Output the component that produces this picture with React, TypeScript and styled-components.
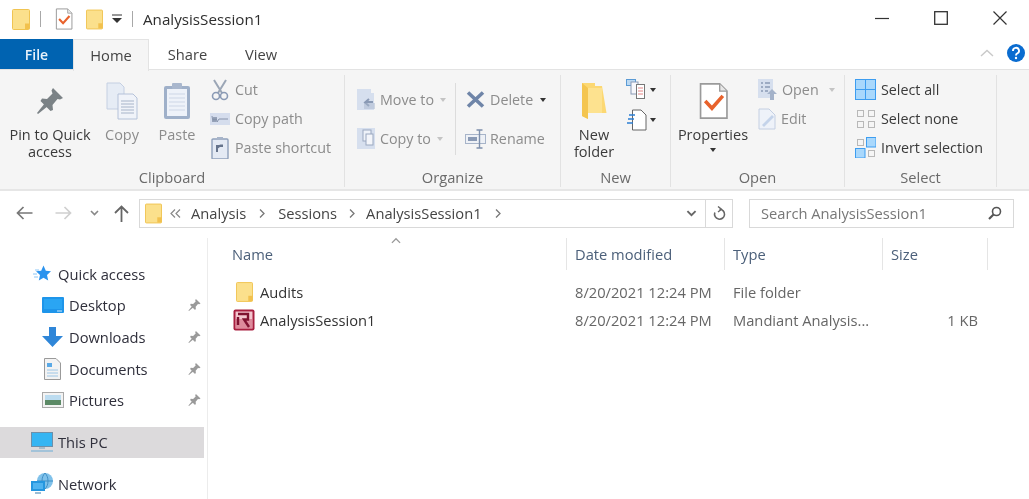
import React from "react";
import styled, { createGlobalStyle } from "styled-components";

const Global = createGlobalStyle`
  html, body { margin: 0; padding: 0; background: #fff; }
  body { font-family: "Open Sans", "Noto Sans", "Liberation Sans", sans-serif; overflow: hidden; }
  svg { display: block; flex: none; }
`;

const Page = styled.div`
  width: 1029px; height: 499px; overflow: hidden; background: #fff; color: #3a3a3a;
  font-size: 14.7px; filter: blur(0.5px);
`;
const Spacer = styled.span<{ $w: number }>`width: ${p => p.$w}px; flex: none;`;

/* ------- title bar ------- */
const TitleBar = styled.div`display: flex; align-items: center; height: 38px; padding-left: 12px;`;
const QuickSep = styled.div<{ $l: number; $r: number }>`
  width: 1px; height: 16px; background: #a8a8a8; margin: 0 ${p => p.$r}px 0 ${p => p.$l}px;
`;
const TitleText = styled.div`font-size: 15.2px; color: #2e2e2e; flex: 1;`;
const WinControls = styled.div`display: flex; align-items: center; margin-right: 22px; gap: 45px; margin-top: -2px;`;

/* ------- tabs ------- */
const TabRow = styled.div`display: flex; height: 32px; position: relative; align-items: flex-start; border-bottom: 1px solid #e3e3e3; box-sizing: border-box;`;
const FileTab = styled.div`
  width: 73px; height: 30px; margin-top: 1px; background: #0063b1; color: #e8f2fb; font-size: 14px; font-weight: 600;
  display: flex; align-items: center; justify-content: center;
`;
const Tab = styled.div<{ $w: number; $active?: boolean }>`
  width: ${p => p.$w}px; height: ${p => (p.$active ? 32 : 30)}px; margin-top: 1px; box-sizing: border-box;
  display: flex; align-items: center; justify-content: center; color: #444; padding-bottom: ${p => (p.$active ? 2 : 0)}px;
  background: ${p => (p.$active ? "#f5f5f5" : "transparent")};
  border: ${p => (p.$active ? "1px solid #e3e3e3" : "none")}; border-bottom: none;
`;
const TabEnd = styled.div`margin-left: auto; display: flex; align-items: center; gap: 13px; height: 30px; margin-right: 4px;`;

/* ------- ribbon ------- */
const Ribbon = styled.div`
  display: flex; height: 121px; background: #f5f5f5; border-bottom: 2px solid #e6e6e6; box-sizing: border-box; padding-top: 5px;
`;
const Group = styled.div<{ $w: number; $plain?: boolean }>`
  width: ${p => p.$w}px; box-sizing: border-box; display: flex; flex-direction: column; height: 112px;
  border-right: ${p => (p.$plain ? "none" : "1px solid #e2e2e2")};
`;
const GroupBody = styled.div`flex: 1; display: flex; align-items: flex-start; min-height: 0;`;
const GroupLabel = styled.div`height: 20px; line-height: 20px; text-align: center; color: #6a6a6a; font-size: 14.7px;`;
const LargeBtn = styled.div<{ $w: number; $dim?: boolean }>`
  width: ${p => p.$w}px; display: flex; flex-direction: column; align-items: center;
  color: ${p => (p.$dim ? "#8c8c8c" : "#3a3a3a")}; line-height: 17px; text-align: center; flex: none; font-size: 14.5px;
`;
const LargeIcon = styled.div`height: 46px; margin-top: 3px; display: flex; align-items: center; justify-content: center;`;
const LargeLabel = styled.div`margin-top: 2px; display: flex; flex-direction: column; align-items: center;`;
const SmallCol = styled.div<{ $ml: number; $gap?: number; $pt?: number }>`
  display: flex; flex-direction: column; margin-left: ${p => p.$ml}px; padding-top: ${p => p.$pt ?? 0}px; gap: ${p => p.$gap ?? 0}px; flex: none;
`;
const SmallBtn = styled.div<{ $dim?: boolean }>`
  display: flex; align-items: center; gap: 5px; height: 29px; white-space: nowrap; font-size: 14.3px; color: ${p => (p.$dim ? "#8c8c8c" : "#3a3a3a")};
`;
const IconSlot = styled.span<{ $w: number }>`width: ${p => p.$w}px; display: flex; justify-content: center; flex: none;`;
const VSep = styled.div`width: 1px; height: 72px; background: #dcdcdc; margin-top: 8px; flex: none;`;
const Caret = styled.span<{ $dim?: boolean; $ml?: number; $mt?: number }>`
  display: inline-block; width: 0; height: 0; margin-left: ${p => p.$ml ?? 5}px; margin-top: ${p => p.$mt ?? 0}px;
  border-left: 3.5px solid transparent; border-right: 3.5px solid transparent;
  border-top: 4px solid ${p => (p.$dim ? "#c4c4c4" : "#333")};
`;

/* ------- address bar ------- */
const AddressRow = styled.div`display: flex; align-items: center; height: 47px; padding-bottom: 3px; box-sizing: border-box;`;
const NavArrows = styled.div`display: flex; align-items: center; width: 139px; flex: none; padding-left: 16px; box-sizing: border-box;`;
const PathBox = styled.div`
  width: 594px; height: 29px; box-sizing: border-box; border: 1px solid #d9d9d9; display: flex; align-items: center; padding-left: 5px; flex: none;
`;
const Crumbs = styled.div`display: flex; align-items: center; flex: 1; color: #444; margin-left: 8px;`;
const Crumb = styled.span<{ $mr?: number }>`margin-right: ${p => p.$mr ?? 12}px; display: flex; white-space: nowrap;`;
const RefreshCell = styled.div`
  width: 26px; height: 27px; border-left: 1px solid #d9d9d9; display: flex; align-items: center; justify-content: center; flex: none; margin-left: 8px;
`;
const SearchBox = styled.div`
  width: 265px; height: 29px; margin-left: 16px; box-sizing: border-box; border: 1px solid #d9d9d9; display: flex; align-items: center;
  justify-content: space-between; padding: 0 11px; color: #777; flex: none;
`;

/* ------- main ------- */
const Main = styled.div`display: flex; height: 261px;`;
const Sidebar = styled.div`width: 208px; flex: none; border-right: 1px solid #ececec; box-sizing: border-box; padding-top: 20px; height: 261px; overflow: hidden;`;
const NavItem = styled.div<{ $indent: number; $selected?: boolean; $h?: number; $mt?: number }>`
  display: flex; align-items: center; height: ${p => p.$h ?? 31.6}px; padding-left: ${p => p.$indent}px; width: 204px; box-sizing: border-box;
  background: ${p => (p.$selected ? "#dcdadc" : "transparent")}; margin-top: ${p => p.$mt ?? 0}px; color: #2f2f3b; position: relative; gap: 5px;
`;
const NavPin = styled.span`position: absolute; right: 3px; top: 50%; transform: translateY(-50%);`;
const Content = styled.div`flex: 1; min-width: 0; position: relative;`;
const SortMark = styled.span`position: absolute; left: 182px; top: -1px; transform: scaleY(-1);`;
const Columns = styled.div`display: grid; grid-template-columns: 359px 158px 158px 105px; width: 780px;`;
const HeaderCell = styled.div`
  height: 32px; display: flex; align-items: center; padding-left: 8px; border-right: 1px solid #e5e5e5; box-sizing: border-box; color: #4c607a;
  &:first-child { padding-left: 24px; }
`;
const Rows = styled.div`padding-top: 8px;`;
const Row = styled.div`display: grid; grid-template-columns: 359px 158px 158px 95px; width: 770px; height: 28px; align-items: center; color: #666;`;
const NameCell = styled.div`display: flex; align-items: center; gap: 5px; padding-left: 25px; color: #333;`;
const Cell = styled.div<{ $right?: boolean }>`padding-left: 8px; text-align: ${p => (p.$right ? "right" : "left")}; white-space: nowrap;`;

/* ------- icons ------- */
const FolderIcon = ({ w = 18, h = 21 }: { w?: number; h?: number }) => (
  <svg width={w} height={h} viewBox="0 0 18 21">
    <rect x="0.5" y="0.5" width="17" height="20" rx="1" fill="#fbe08c" stroke="#f0c452" />
    <path d="M13 20V14.5H17.5V20Z" fill="#f2c14e" />
  </svg>
);
const CheckDoc = ({ w = 18, h = 22 }: { w?: number; h?: number }) => (
  <svg width={w} height={h} viewBox="0 0 28 36">
    <path d="M1.5 1.5H20L27 8.5V34.5H1.5Z" fill="#fff" stroke="#9a9a9a" strokeWidth="1.6" />
    <path d="M20 1.5V8.5H27" fill="#e8e8e8" stroke="#9a9a9a" strokeWidth="1.3" />
    <path d="M6 18L12.5 25L23 13" fill="none" stroke="#e8622c" strokeWidth="3.4" />
  </svg>
);
const Pin = ({ s = 28, c = "#7b8286" }: { s?: number; c?: string }) => (
  <svg width={s} height={s} viewBox="0 0 28 28">
    <path d="M17 1L27 11L24 12.5L21.5 12L16.5 18L17 23L14.5 24L4.5 14L6 11.5L11 12L16.5 6.5L15.5 3.5Z" fill={c} />
    <path d="M9 16L1 26L2 27L12 19Z" fill={c} />
  </svg>
);
const CopyIcon = () => (
  <svg width="32" height="38" viewBox="0 0 32 38">
    <path d="M1 1H14L18 5V27H1Z" fill="#e6ecf5" stroke="#c4cfe2" />
    <path d="M12 12H27L31 16V37H12Z" fill="#f0f3f9" stroke="#b5c2d9" />
    {[19, 22, 25, 28, 31].map(y => <path key={y} d={`M15 ${y}H28`} stroke="#a7b4c9" />)}
  </svg>
);
const PasteIcon = () => (
  <svg width="28" height="38" viewBox="0 0 28 38">
    <rect x="1" y="4" width="26" height="33" rx="2" fill="#9fb0c9" />
    <rect x="4" y="7" width="20" height="27" fill="#eef2f9" />
    <rect x="9" y="1" width="10" height="6" rx="1" fill="#a9b7cd" />
    {[12, 16, 20, 24, 28].map(y => <path key={y} d={`M6 ${y}H22`} stroke="#cdd6e6" />)}
  </svg>
);
const Scissors = () => (
  <svg width="18" height="22" viewBox="0 0 18 22">
    <path d="M3 1L11 14M15 1L7 14" stroke="#9ba6b6" strokeWidth="2" fill="none" />
    <circle cx="5" cy="17" r="3.5" fill="none" stroke="#8a9ab5" strokeWidth="1.6" />
    <circle cx="13" cy="17" r="3.5" fill="none" stroke="#8a9ab5" strokeWidth="1.6" />
  </svg>
);
const CopyPath = () => (
  <svg width="20" height="12" viewBox="0 0 20 12">
    <rect width="20" height="12" fill="#d5dded" />
    <path d="M2 3L3 9L4 4L5 9L6 4L7 9L9 6H18" stroke="#7d8aa3" strokeWidth="0.9" fill="none" />
  </svg>
);
const PasteShortcut = () => (
  <svg width="18" height="22" viewBox="0 0 18 22">
    <rect x="1" y="2" width="16" height="20" rx="1" fill="#e4eaf4" stroke="#8fa0bb" strokeWidth="1.4" />
    <rect x="6" y="0" width="6" height="3" fill="#a7b4c9" />
    <path d="M6 15V9H11V7.5M6 11L10 8" stroke="#66748c" strokeWidth="2" fill="none" />
  </svg>
);
const MoveTo = () => (
  <svg width="18" height="21" viewBox="0 0 18 21">
    <path d="M0 0H14V4H17V21H0Z" fill="#d6dfee" />
    <path d="M16 13H9M12 10L8 13.5L12 17" stroke="#8a9ab5" strokeWidth="2" fill="none" />
    <rect x="7" y="14" width="11" height="6" fill="#a9b7cd" opacity=".5" />
  </svg>
);
const CopyTo = () => (
  <svg width="18" height="21" viewBox="0 0 18 21">
    <rect width="18" height="21" fill="#d6dfee" />
    <rect x="6" y="2" width="8" height="11" fill="#eef2f9" stroke="#9aa8bf" />
    <rect x="9" y="6" width="7" height="11" fill="#f3f5fa" stroke="#9aa8bf" />
  </svg>
);
const DeleteX = () => (
  <svg width="19" height="17" viewBox="0 0 19 17">
    <path d="M2 1.5L17 15.5M17 1.5L2 15.5" stroke="#6f85a8" strokeWidth="3.6" />
  </svg>
);
const RenameIcon = () => (
  <svg width="21" height="20" viewBox="0 0 21 20">
    <rect x="0.5" y="5.5" width="20" height="9" fill="#eef1f6" stroke="#a7b4c9" />
    <rect x="3" y="8" width="9" height="4" fill="#8a9ab5" />
    <path d="M14.5 1V19M11.5 1H17.5M11.5 19H17.5" stroke="#7d8fac" strokeWidth="1.4" />
  </svg>
);
const NewFolder = () => (
  <svg width="25" height="36" viewBox="0 0 25 36">
    <path d="M0 0H13V3H20L24.5 30H6V36L0 33Z" fill="#fcd873" />
    <path d="M0 0L6 5V36L0 33Z" fill="#f4c54f" />
    <path d="M6 5H20V30H6Z" fill="#fde28f" />
  </svg>
);
const NewItem = () => (
  <svg width="21" height="21" viewBox="0 0 21 21">
    <rect x="0.5" y="0.5" width="9" height="6" fill="#bcd9f2" stroke="#5b9bd5" />
    <rect x="5" y="3" width="7" height="12" fill="#f7f7fb" stroke="#8a9ab5" />
    <rect x="10.5" y="5.5" width="8" height="14" fill="#fff" stroke="#777" />
    <path d="M12 9H17M12 12H17M12 15H17" stroke="#d66" strokeWidth=".8" />
  </svg>
);
const NewDoc = () => (
  <svg width="21" height="22" viewBox="0 0 21 22">
    <path d="M6.5 1H15L20 6V21H6.5Z" fill="#fff" stroke="#666" />
    <path d="M3 6H9M2 10H8M1 14H7" stroke="#2d7fd3" strokeWidth="1.6" />
  </svg>
);
const OpenIcon = () => (
  <svg width="19" height="21" viewBox="0 0 19 21">
    <rect width="15" height="19" fill="#d6dfee" />
    <path d="M3 4H5M3 8H5M3 12H5M7 4H12M7 8H12M7 12H10" stroke="#8a9ab5" strokeWidth="1.6" />
    <path d="M14 10L19 15H16V21H12V15H9Z" fill="#a4b2c9" />
  </svg>
);
const EditIcon = () => (
  <svg width="18" height="22" viewBox="0 0 18 22">
    <path d="M1 1H11L17 7V21H1Z" fill="#eef2f9" stroke="#c4cfe2" />
    <path d="M4 17L14 7L16 9L6 19Z" fill="#c4d3ea" />
  </svg>
);
const Grid4 = ({ on }: { on: boolean[] }) => (
  <svg width="21" height="21" viewBox="0 0 21 21">
    {[[0, 0], [11, 0], [0, 11], [11, 11]].map(([x, y], i) =>
      on[i] ? (
        <rect key={i} x={x + 0.5} y={y + 0.5} width="9.5" height="9.5" fill="#a9d8fc" stroke="#3d9df0" />
      ) : (
        <rect key={i} x={x + 2.5} y={y + 2.5} width="6" height="6" fill="#f5f5f5" stroke="#b8b8b8" />
      ),
    )}
  </svg>
);
const SelectAll = () => (
  <svg width="21" height="21" viewBox="0 0 21 21">
    <rect x="0.5" y="0.5" width="20" height="20" fill="#a9d8fc" stroke="#3d9df0" />
    <path d="M10.5 0V21M0 10.5H21" stroke="#3d9df0" />
  </svg>
);
const ArrowLeft = ({ c }: { c: string }) => (
  <svg width="17" height="14" viewBox="0 0 17 14">
    <path d="M16.5 7H2M7.5 1L1.5 7L7.5 13" stroke={c} strokeWidth="1.7" fill="none" />
  </svg>
);
const ArrowRight = ({ c }: { c: string }) => (
  <svg width="17" height="14" viewBox="0 0 17 14">
    <path d="M0.5 7H15M9.5 1L15.5 7L9.5 13" stroke={c} strokeWidth="1.7" fill="none" />
  </svg>
);
const ArrowUp = () => (
  <svg width="15" height="17" viewBox="0 0 15 17">
    <path d="M7.5 17V2M1 8L7.5 1.5L14 8" stroke="#666" strokeWidth="1.8" fill="none" />
  </svg>
);
const Chev = ({ w = 9, h = 6, c = "#777", sw = 1.6 }: { w?: number; h?: number; c?: string; sw?: number }) => (
  <svg width={w} height={h} viewBox="0 0 9 6"><path d="M1 1L4.5 4.5L8 1" stroke={c} strokeWidth={sw} fill="none" /></svg>
);
const ChevUp = ({ w = 14, h = 8, c = "#c9c9c9" }: { w?: number; h?: number; c?: string }) => (
  <svg width={w} height={h} viewBox="0 0 14 8"><path d="M1 7L7 1.5L13 7" stroke={c} strokeWidth="1.4" fill="none" /></svg>
);
const CrumbArrow = () => (
  <svg width="6" height="9" viewBox="0 0 6 9"><path d="M1 .5L5 4.5L1 8.5" stroke="#777" strokeWidth="1.3" fill="none" /></svg>
);
const DoubleChev = () => (
  <svg width="11" height="9" viewBox="0 0 11 9"><path d="M5 .5L1 4.5L5 8.5M10 .5L6 4.5L10 8.5" stroke="#888" strokeWidth="1.2" fill="none" /></svg>
);
const Refresh = () => (
  <svg width="14" height="15" viewBox="0 0 14 15">
    <path d="M7.5 3.2A5 5 0 1 1 2.8 6.6" stroke="#666" strokeWidth="1.6" fill="none" />
    <path d="M6 0.5L9.5 3.2L6 6" stroke="#666" strokeWidth="1.4" fill="none" />
  </svg>
);
const SearchIcon = () => (
  <svg width="14" height="14" viewBox="0 0 14 14">
    <circle cx="8.5" cy="5.5" r="4" stroke="#555" strokeWidth="1.6" fill="none" />
    <path d="M5.5 8.5L1 13" stroke="#555" strokeWidth="2.2" />
  </svg>
);
const Star = () => (
  <svg width="18" height="17" viewBox="0 0 18 17">
    <path d="M10.5 0.5L12.8 5.7L18 6.3L14 10L15.2 15.5L10.5 12.7L5.8 15.5L7 10L3 6.3L8.2 5.7Z" fill="#2b93ee" />
    <path d="M0 9H4M1 12H5M2 5H6" stroke="#8cc6f6" strokeWidth="1" />
  </svg>
);
const Desktop = () => (
  <svg width="22" height="16" viewBox="0 0 22 16">
    <rect width="22" height="16" rx="1" fill="#1e95ea" />
    <rect x="2" y="2" width="18" height="10" fill="#2aa5f3" />
    <path d="M15 14H20" stroke="#cde8fb" />
  </svg>
);
const Download = () => (
  <svg width="21" height="20" viewBox="0 0 21 20">
    <path d="M7 0H14V9H21L10.5 20L0 9H7Z" fill="#2f86d8" />
  </svg>
);
const DocsIcon = () => (
  <svg width="17" height="22" viewBox="0 0 17 22">
    <path d="M0.5 0.5H12L16.5 5V21.5H0.5Z" fill="#f3f3f3" stroke="#9a9a9a" />
    <path d="M3 5H8V9H3Z" fill="#5aa9e6" />
    <path d="M3 12H14M3 15H14M3 18H14" stroke="#9cc6e6" />
  </svg>
);
const PicturesIcon = () => (
  <svg width="22" height="16" viewBox="0 0 22 16">
    <rect x="0.5" y="0.5" width="21" height="15" fill="#f3f3f3" stroke="#a9a9a9" />
    <rect x="3" y="3" width="16" height="5" fill="#bcdcf0" />
    <rect x="3" y="8" width="16" height="5" fill="#5c8a66" />
  </svg>
);
const ThisPC = () => (
  <svg width="22" height="20" viewBox="0 0 22 20">
    <rect x="0.5" y="0.5" width="21" height="14" fill="#35b5f3" stroke="#6f8fa8" />
    <path d="M8 15H14V17H8Z" fill="#a8bccb" />
    <path d="M0 19H22" stroke="#7eb4d8" strokeWidth="1.2" />
  </svg>
);
const Network = () => (
  <svg width="22" height="21" viewBox="0 0 22 21">
    <circle cx="14" cy="8" r="8" fill="#7fc1ea" />
    <path d="M14 0C10 4 10 12 14 16M14 0C18 4 18 12 14 16M6 8H22" stroke="#3f8fc6" fill="none" />
    <rect x="0" y="8" width="14" height="10" fill="#2596df" />
    <rect x="2" y="10" width="10" height="6" fill="#4fb3f0" />
    <path d="M4 20H10" stroke="#7aa8c8" strokeWidth="1.5" />
  </svg>
);
const RFile = () => (
  <svg width="22" height="22" viewBox="0 0 22 22">
    <rect x="0.5" y="0.5" width="21" height="21" rx="2" fill="#a81e3f" />
    <rect x="2.5" y="2.5" width="17" height="17" fill="#f3c6cf" />
    <path d="M2.5 10H19.5V19.5H2.5Z" fill="#d37085" opacity=".7" />
    <path d="M5 5H15V10.5H11L16 18M5 8V16" stroke="#7f1230" strokeWidth="2.4" fill="none" />
  </svg>
);
const Help = () => (
  <svg width="18" height="18" viewBox="0 0 18 18">
    <circle cx="9" cy="9" r="9" fill="#0a6cd0" />
    <path d="M6 7A3 3 0 1 1 10 9.6Q9 10 9 11.5" stroke="#fff" strokeWidth="1.9" fill="none" />
    <circle cx="9" cy="14" r="1.2" fill="#fff" />
  </svg>
);

const PinMark = () => <NavPin><Pin s={13} c="#9a9a9a" /></NavPin>;

export default function App() {
  return (
    <Page>
      <Global />
      <TitleBar>
        <FolderIcon />
        <QuickSep $l={10} $r={14} />
        <CheckDoc />
        <Spacer $w={13} />
        <FolderIcon w={17} />
        <Spacer $w={8} />
        <svg width="12" height="10" viewBox="0 0 12 10"><path d="M1 1H11" stroke="#333" /><path d="M1 4H11L6 9Z" fill="#333" /></svg>
        <QuickSep $l={9} $r={10} />
        <TitleText>AnalysisSession1</TitleText>
        <WinControls>
          <svg width="14" height="14" viewBox="0 0 14 14"><path d="M0 7.5H14" stroke="#333" strokeWidth="1.2" /></svg>
          <svg width="14" height="14" viewBox="0 0 14 14"><rect x="0.7" y="0.7" width="12.6" height="12.6" fill="none" stroke="#333" strokeWidth="1.3" /></svg>
          <svg width="14" height="14" viewBox="0 0 14 14"><path d="M0.5 0.5L13.5 13.5M13.5 0.5L0.5 13.5" stroke="#333" strokeWidth="1.2" /></svg>
        </WinControls>
      </TitleBar>
      <TabRow>
        <FileTab>File</FileTab>
        <Tab $w={76} $active>Home</Tab>
        <Tab $w={77}>Share</Tab>
        <Tab $w={70}>View</Tab>
        <TabEnd>
          <ChevUp />
          <Help />
        </TabEnd>
      </TabRow>
      <Ribbon>
        <Group $w={345}>
          <GroupBody>
            <LargeBtn $w={100}>
              <LargeIcon><Pin /></LargeIcon>
              <LargeLabel>Pin to Quick<br />access</LargeLabel>
            </LargeBtn>
            <LargeBtn $w={44} $dim>
              <LargeIcon><CopyIcon /></LargeIcon>
              <LargeLabel>Copy</LargeLabel>
            </LargeBtn>
            <LargeBtn $w={66} $dim>
              <LargeIcon><PasteIcon /></LargeIcon>
              <LargeLabel>Paste</LargeLabel>
            </LargeBtn>
            <SmallCol $ml={0}>
              <SmallBtn $dim><IconSlot $w={20}><Scissors /></IconSlot>Cut</SmallBtn>
              <SmallBtn $dim><IconSlot $w={20}><CopyPath /></IconSlot>Copy path</SmallBtn>
              <SmallBtn $dim><IconSlot $w={20}><PasteShortcut /></IconSlot>Paste shortcut</SmallBtn>
            </SmallCol>
          </GroupBody>
          <GroupLabel>Clipboard</GroupLabel>
        </Group>
        <Group $w={216}>
          <GroupBody>
            <SmallCol $ml={12} $pt={10} $gap={10}>
              <SmallBtn $dim><IconSlot $w={18}><MoveTo /></IconSlot>Move to<Caret $dim $ml={1} /></SmallBtn>
              <SmallBtn $dim><IconSlot $w={18}><CopyTo /></IconSlot>Copy to<Caret $dim $ml={1} /></SmallBtn>
            </SmallCol>
            <Spacer $w={9} />
            <VSep />
            <SmallCol $ml={9} $pt={10} $gap={10}>
              <SmallBtn $dim><IconSlot $w={20}><DeleteX /></IconSlot>Delete<Caret $ml={2} /></SmallBtn>
              <SmallBtn $dim><IconSlot $w={20}><RenameIcon /></IconSlot>Rename</SmallBtn>
            </SmallCol>
          </GroupBody>
          <GroupLabel>Organize</GroupLabel>
        </Group>
        <Group $w={110}>
          <GroupBody>
            <LargeBtn $w={66}>
              <LargeIcon><NewFolder /></LargeIcon>
              <LargeLabel>New<br />folder</LargeLabel>
            </LargeBtn>
            <SmallCol $ml={-1} $gap={1}>
              <SmallBtn><NewItem /><Caret $ml={-2} /></SmallBtn>
              <SmallBtn><NewDoc /><Caret $ml={-2} /></SmallBtn>
            </SmallCol>
          </GroupBody>
          <GroupLabel>New</GroupLabel>
        </Group>
        <Group $w={174}>
          <GroupBody>
            <LargeBtn $w={84}>
              <LargeIcon><CheckDoc w={29} h={38} /></LargeIcon>
              <LargeLabel>Properties<Caret $ml={0} $mt={5} /></LargeLabel>
            </LargeBtn>
            <SmallCol $ml={3}>
              <SmallBtn $dim><OpenIcon />Open<Caret $dim /></SmallBtn>
              <SmallBtn $dim><EditIcon />Edit</SmallBtn>
            </SmallCol>
          </GroupBody>
          <GroupLabel>Open</GroupLabel>
        </Group>
        <Group $w={152}>
          <GroupBody>
            <SmallCol $ml={10}>
              <SmallBtn><SelectAll />Select all</SmallBtn>
              <SmallBtn><Grid4 on={[false, false, false, false]} />Select none</SmallBtn>
              <SmallBtn><Grid4 on={[false, true, true, false]} />Invert selection</SmallBtn>
            </SmallCol>
          </GroupBody>
          <GroupLabel>Select</GroupLabel>
        </Group>
        <Group $w={32} $plain />
      </Ribbon>
      <AddressRow>
        <NavArrows>
          <ArrowLeft c="#777" />
          <Spacer $w={22} />
          <ArrowRight c="#cfcfcf" />
          <Spacer $w={18} />
          <Chev w={9} h={6} c="#888" />
          <Spacer $w={15} />
          <ArrowUp />
        </NavArrows>
        <PathBox>
          <FolderIcon w={17} h={21} />
          <Crumbs>
            <Crumb $mr={10}><DoubleChev /></Crumb>
            <Crumb $mr={13}>Analysis</Crumb>
            <Crumb $mr={13}><CrumbArrow /></Crumb>
            <Crumb $mr={12}>Sessions</Crumb>
            <Crumb $mr={11}><CrumbArrow /></Crumb>
            <Crumb $mr={13}>AnalysisSession1</Crumb>
            <Crumb><CrumbArrow /></Crumb>
          </Crumbs>
          <Chev w={11} h={7} c="#666" />
          <RefreshCell><Refresh /></RefreshCell>
        </PathBox>
        <SearchBox>Search AnalysisSession1<SearchIcon /></SearchBox>
      </AddressRow>
      <Main>
        <Sidebar>
          <NavItem $indent={30}><IconSlot $w={23}><Star /></IconSlot>Quick access</NavItem>
          <NavItem $indent={41}><IconSlot $w={23}><Desktop /></IconSlot>Desktop<PinMark /></NavItem>
          <NavItem $indent={41}><IconSlot $w={23}><Download /></IconSlot>Downloads<PinMark /></NavItem>
          <NavItem $indent={41}><IconSlot $w={23}><DocsIcon /></IconSlot>Documents<PinMark /></NavItem>
          <NavItem $indent={41}><IconSlot $w={23}><PicturesIcon /></IconSlot>Pictures<PinMark /></NavItem>
          <NavItem $indent={30} $selected $h={31} $mt={11}><IconSlot $w={23}><ThisPC /></IconSlot>This PC</NavItem>
          <NavItem $indent={30} $mt={10}><IconSlot $w={23}><Network /></IconSlot>Network</NavItem>
        </Sidebar>
        <Content>
          <SortMark><Chev w={12} h={7} c="#999" sw={1.1} /></SortMark>
          <Columns>
            <HeaderCell>Name</HeaderCell>
            <HeaderCell>Date modified</HeaderCell>
            <HeaderCell>Type</HeaderCell>
            <HeaderCell>Size</HeaderCell>
          </Columns>
          <Rows>
            <Row>
              <NameCell><IconSlot $w={22}><FolderIcon w={17} h={20} /></IconSlot>Audits</NameCell>
              <Cell>8/20/2021 12:24 PM</Cell>
              <Cell>File folder</Cell>
              <Cell />
            </Row>
            <Row>
              <NameCell><IconSlot $w={22}><RFile /></IconSlot>AnalysisSession1</NameCell>
              <Cell>8/20/2021 12:24 PM</Cell>
              <Cell>Mandiant Analysis...</Cell>
              <Cell $right>1 KB</Cell>
            </Row>
          </Rows>
        </Content>
      </Main>
    </Page>
  );
}
